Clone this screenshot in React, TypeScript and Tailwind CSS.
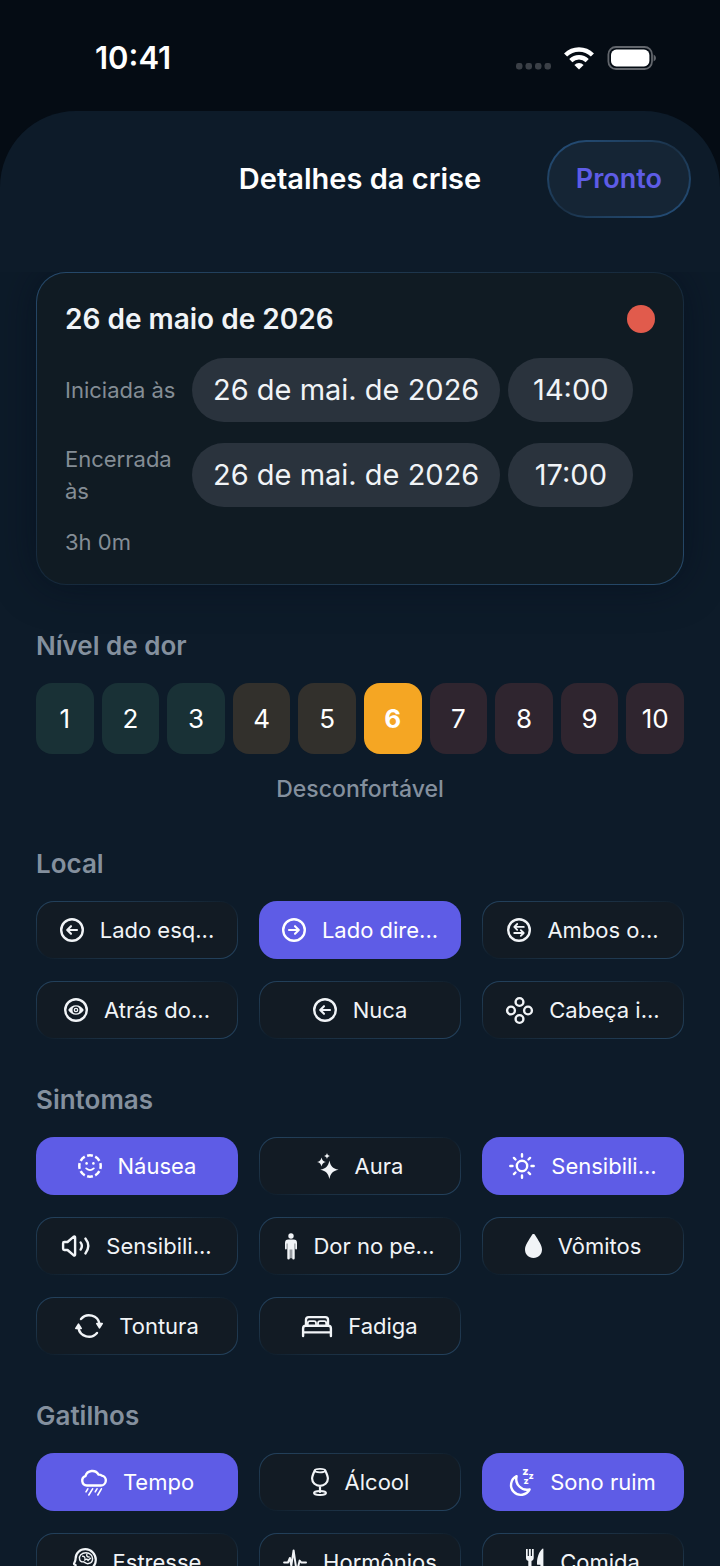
import { useState } from 'react';
import type { ReactNode } from 'react';
import clsx from 'clsx';

interface IconProps {
  w: number;
  h: number;
  children: ReactNode;
}

function Icon({ w, h, children }: IconProps) {
  return (
    <svg
      width={w}
      height={h}
      viewBox={`0 0 ${w} ${h}`}
      fill="none"
      stroke="currentColor"
      strokeWidth={2.4}
      strokeLinecap="round"
      strokeLinejoin="round"
      className="shrink-0 overflow-visible"
      aria-hidden="true"
    >
      {children}
    </svg>
  );
}

const arrowLeft = (
  <Icon w={24} h={24}>
    <circle cx="12" cy="12" r="10.8" />
    <path d="M17 12H7.4M11 8.2 7.2 12l3.8 3.8" strokeWidth="2.1" />
  </Icon>
);

const arrowRight = (
  <Icon w={24} h={24}>
    <circle cx="12" cy="12" r="10.8" />
    <path d="M7 12h9.6M13 8.2l3.8 3.8-3.8 3.8" strokeWidth="2.1" />
  </Icon>
);

const swap = (
  <Icon w={24} h={24}>
    <circle cx="12" cy="12" r="10.8" />
    <path d="M16.8 8.9H7.4M10.2 6 7.3 8.9l2.9 2.9M7.2 15h9.4M13.8 12.1l2.9 2.9-2.9 2.9" strokeWidth="1.8" />
  </Icon>
);

const eye = (
  <Icon w={24} h={24}>
    <circle cx="12" cy="12" r="10.8" />
    <path
      d="M4.2 12C6 9 8.8 7.3 12 7.3S18 9 19.8 12C18 15 15.2 16.7 12 16.7S6 15 4.2 12ZM12 8.5a3.5 3.5 0 1 0 0 7 3.5 3.5 0 0 0 0-7Z"
      fill="currentColor"
      fillRule="evenodd"
      stroke="none"
    />
    <circle cx="12" cy="12" r="1.7" strokeWidth="1.3" />
  </Icon>
);

const fourCircles = (
  <Icon w={27} h={27}>
    <circle cx="13.5" cy="5" r="3.9" />
    <circle cx="5" cy="13.5" r="3.9" />
    <circle cx="22" cy="13.5" r="3.9" />
    <circle cx="13.5" cy="22" r="3.9" />
  </Icon>
);

const dashedFace = (
  <Icon w={24} h={24}>
    <circle
      cx="12"
      cy="12"
      r="10.7"
      pathLength="80"
      strokeDasharray="7 3"
      strokeDashoffset="3.5"
      strokeLinecap="butt"
      strokeWidth="2.5"
    />
    <circle cx="8.6" cy="9.4" r="1.3" fill="currentColor" stroke="none" />
    <circle cx="15.4" cy="9.4" r="1.3" fill="currentColor" stroke="none" />
    <path d="M8.2 14.4q3.8 3.4 7.6 0" strokeWidth="1.8" />
  </Icon>
);

const sparkles = (
  <Icon w={22} h={27}>
    <g fill="currentColor" stroke="none">
      <path d="M12.4 7.4c1.3 5.8 3 7.8 9.2 9.3-6.2 1.5-7.9 3.5-9.2 9.3-1.3-5.8-3-7.8-9.2-9.3 6.2-1.5 7.9-3.5 9.2-9.3Z" />
      <path d="M4.5 4.5c.7 2.8 1.6 3.8 4.5 4.5-2.9.7-3.8 1.7-4.5 4.5C3.8 10.7 2.9 9.7 0 9c2.9-.7 3.8-1.7 4.5-4.5Z" />
      <path d="M10 0c.5 1.9 1.1 2.5 2.9 3-1.8.5-2.4 1.1-2.9 3-.5-1.9-1.1-2.5-2.9-3 1.8-.5 2.4-1.1 2.9-3Z" />
    </g>
  </Icon>
);

const sun = (
  <Icon w={26} h={26}>
    <circle cx="13" cy="13" r="5.2" />
    <path d="M13 1.3v2.2M13 22.5v2.2M1.3 13h2.2M22.5 13h2.2M4.9 4.9l1.6 1.6M19.5 19.5l1.6 1.6M4.9 21.1l1.6-1.6M19.5 6.5l1.6-1.6" />
  </Icon>
);

const speaker = (
  <Icon w={28} h={22}>
    <path d="M1.1 8.2v5.6q0 1.2 1.2 1.2h3.2l6 5.2q1.6 1 1.6-.8V2.6q0-1.8-1.6-.8l-6 5.2H2.3q-1.2 0-1.2 1.2Z" />
    <path d="M18.6 7.4q2.6 3.6 0 7.2M23.4 3.6q5.8 7.4 0 14.8" />
  </Icon>
);

const person = (
  <Icon w={12} h={27}>
    <g fill="currentColor" stroke="none">
      <circle cx="6" cy="3" r="2.7" />
      <path d="M3.4 6.6h5.2Q12 6.6 12 10v5.6a.9.9 0 0 1-1.8 0V10.4h-.5v14.9a1.25 1.25 0 0 1-2.5 0v-8.7H4.8v8.7a1.25 1.25 0 0 1-2.5 0V10.4h-.5v5.2a.9.9 0 0 1-1.8 0V10q0-3.4 3.4-3.4Z" />
      <path d="M4.8 16h.8v9.3h-.8zM6.400 16h.8v9.3h-.8z" />
    </g>
  </Icon>
);

const drop = (
  <Icon w={17} h={24}>
    <path
      d="M8.5 0c.8 0 1.3.5 1.7 1.2C13 6 17 10.8 17 15.6 17 20.6 13.5 24 8.5 24S0 20.6 0 15.6C0 10.8 4 6 6.8 1.2 7.2.5 7.7 0 8.5 0Z"
      fill="currentColor"
      stroke="none"
    />
  </Icon>
);

const rotate = (
  <Icon w={28} h={24}>
    <path d="M6 5A10.7 10.7 0 0 1 24.6 10M22 19A10.7 10.7 0 0 1 3.4 14" />
    <path d="M21.8 9.6h5.4L24.5 13.8ZM.8 14.4h5.4L3.5 10.2Z" fill="currentColor" strokeWidth="1.6" />
  </Icon>
);

const bed = (
  <Icon w={30} h={21}>
    <path d="M1.1 20V12.4q0-2.6 2.6-2.6h22.6q2.6 0 2.6 2.6V20M1.1 16.4h27.8M4 9.4V3.8q0-2.7 2.7-2.7h16.6Q26 1.1 26 3.8v5.6" />
    <path d="M5.8 9V7.2q0-2 2-2h4.2q2 0 2 2V9M16 9V7.2q0-2 2-2h4.2q2 0 2 2V9" strokeWidth="1.8" />
  </Icon>
);

const cloudRain = (
  <Icon w={27} h={28}>
    <path d="M6.8 17.5h14a5 5 0 0 0 1-9.9 4.3 4.3 0 0 0-3.2-1A7.2 7.2 0 0 0 5.4 8.2 4.8 4.8 0 0 0 6.8 17.5Z" />
    <path d="M7.8 20.8 6 23.8M12.6 20.8 8.8 27M17 20.8l-1.8 3M21.4 20.8 17.8 27" strokeWidth="1.6" />
  </Icon>
);

const wine = (
  <Icon w={18} h={28}>
    <path d="M3.8 2.6C2.6 5 1.1 8 1.1 10.6A7.9 7.2 0 0 0 16.9 10.6C16.9 8 15.4 5 14.2 2.6M9 18v6" strokeWidth="2.2" />
    <ellipse cx="9" cy="2.6" rx="5.3" ry="1.7" strokeWidth="1.8" />
    <ellipse cx="9" cy="25" rx="6" ry="1.9" strokeWidth="2" />
  </Icon>
);

const moonZzz = (
  <Icon w={24} h={28}>
    <path d="M6.6 8.2A9.8 9.8 0 1 0 19.6 21.4 10.8 10.8 0 0 1 6.6 8.2Z" />
    <g fill="currentColor" stroke="none" fontFamily="Inter, sans-serif" fontWeight="800">
      <text x="12.2" y="6.6" fontSize="11">z</text>
      <text x="18.4" y="11.4" fontSize="9">z</text>
      <text x="13.6" y="15.6" fontSize="9">z</text>
    </g>
  </Icon>
);

const brain = (
  <Icon w={24} h={28}>
    <path
      d="M17.6 26.9v-6.3c3.4-1.8 5.2-4.8 5.2-8.6A10.6 10.6 0 0 0 12.4 1.2C6.6 1.2 2.6 5.4 2.6 10.6c0 2-.6 3-1.4 4.6-.4 1 0 1.6 1.4 1.8v3.6q0 1.8 2 1.8h2.6v4.5"
      strokeWidth="2.2"
    />
    <path
      d="M6.6 11.4c-1-3.6 2-6.6 6.4-6.6 3.8 0 6.6 2.6 6.6 6 0 2.6-1.6 4.6-3.6 4.4-2 1.6-3.6-.6-5.4-1.4-2 .4-3.8-.6-4-2.4Zm3-3.2c1.4 0 2.4.6 2.2 2M13.8 6.4c-.4 2 .8 2.8 2.4 2.6M11.6 12c1.6-1.4 3-.8 3.6.6M17.6 10.2l-1.8 1.4"
      strokeWidth="1.4"
    />
  </Icon>
);

const pulse = (
  <Icon w={24} h={26}>
    <path d="M1.1 13.6h3.8l2-4.6 1.4 7.6L10.6 1.4l3.2 22.4 2.8-12.2 1.8 2H23" strokeWidth="2" />
  </Icon>
);

const forkKnife = (
  <Icon w={18} h={28}>
    <g fill="currentColor" stroke="none">
      <path d="M0 1h1.7v7h1.2V1h1.9v7H6V1h1.7v9.2q0 2-2.2 2.9v12.3a1.6 1.6 0 0 1-3.2 0V13.1Q0 12.2 0 10.2Z" />
      <path d="M17.4 1.2v24.2a1.5 1.5 0 0 1-3 0V16.8h-2.6q-.8 0-.8-.9C11 9 13 4 16.4.8q1-.6 1 .4Z" />
    </g>
  </Icon>
);

interface Option {
  label: string;
  icon: ReactNode;
}

const LOCATIONS: Option[] = [
  { label: 'Lado esq...', icon: arrowLeft },
  { label: 'Lado dire...', icon: arrowRight },
  { label: 'Ambos o...', icon: swap },
  { label: 'Atrás do...', icon: eye },
  { label: 'Nuca', icon: arrowLeft },
  { label: 'Cabeça i...', icon: fourCircles },
];

const SYMPTOMS: Option[] = [
  { label: 'Náusea', icon: dashedFace },
  { label: 'Aura', icon: sparkles },
  { label: 'Sensibili...', icon: sun },
  { label: 'Sensibili...', icon: speaker },
  { label: 'Dor no pe...', icon: person },
  { label: 'Vômitos', icon: drop },
  { label: 'Tontura', icon: rotate },
  { label: 'Fadiga', icon: bed },
];

const TRIGGERS: Option[] = [
  { label: 'Tempo', icon: cloudRain },
  { label: 'Álcool', icon: wine },
  { label: 'Sono ruim', icon: moonZzz },
  { label: 'Estresse', icon: brain },
  { label: 'Hormônios', icon: pulse },
  { label: 'Comida', icon: forkKnife },
];

const LEVELS = [1, 2, 3, 4, 5, 6, 7, 8, 9, 10];

function levelColor(level: number, active: boolean) {
  if (level <= 3) return active ? 'bg-[#34c78f]' : 'bg-[#193136]';
  if (level <= 6) return active ? 'bg-[#f5a623]' : 'bg-[#32302c]';
  return active ? 'bg-[#e15b4c]' : 'bg-[#2f252f]';
}

function StatusBar() {
  return (
    <div className="flex items-center justify-between pt-10 pr-16 pb-[35px] pl-[95px]">
      <span className="text-[31px] leading-9 font-semibold text-white">10:41</span>
      <div className="flex items-center gap-[13px]">
        <svg width="36" height="24" viewBox="0 0 36 24" fill="#3b4047" aria-hidden="true">
          <rect x="1" y="17" width="6.5" height="6.5" rx="2.4" />
          <rect x="10.5" y="17" width="6.5" height="6.5" rx="2.4" />
          <rect x="20" y="17" width="6.5" height="6.5" rx="2.4" />
          <rect x="29.5" y="17" width="6.5" height="6.5" rx="2.4" />
        </svg>
        <svg width="30" height="24" viewBox="0 0 30 24" fill="none" stroke="#fff" strokeWidth="4.4" aria-hidden="true">
          <path d="M1.6 9a19 19 0 0 1 26.8 0" />
          <path d="M6.8 14.6a11.6 11.6 0 0 1 16.4 0" />
          <path d="M15 23.6 10.4 18.9a6.5 6.5 0 0 1 9.2 0Z" fill="#fff" stroke="none" />
        </svg>
        <svg width="49" height="24" viewBox="0 0 49 24" fill="none" aria-hidden="true">
          <rect x="1.4" y="1" width="43.6" height="22" rx="7.5" stroke="#62666c" strokeWidth="1.8" />
          <rect x="4" y="3.6" width="38.4" height="16.8" rx="5.4" fill="#fff" />
          <path d="M46.6 8.4q2.4 1 2.4 3.6t-2.4 3.6Z" fill="#62666c" />
        </svg>
      </div>
    </div>
  );
}

function DateRow({ id, label, date, time }: { id: string; label: string; date: string; time: string }) {
  const pill = 'h-16 rounded-full bg-[#2a333d] text-[29px] text-[#f1f4f7] whitespace-nowrap';
  return (
    <div className="flex items-center gap-4">
      <span id={id} className="w-[111px] text-[22px] leading-8 text-[#848d95]">
        {label}
      </span>
      <div className="flex gap-2" role="group" aria-labelledby={id}>
        <button type="button" className={clsx(pill, 'px-[21px]')}>{date}</button>
        <button type="button" className={clsx(pill, 'min-w-[125px] px-[21px]')}>{time}</button>
      </div>
    </div>
  );
}

function Section({ title, children }: { title: string; children: ReactNode }) {
  return (
    <section className="flex flex-col gap-[21px]">
      <h2 className="text-[26px] leading-8 font-semibold text-[#84909e]">{title}</h2>
      {children}
    </section>
  );
}

interface ChipGridProps {
  options: Option[];
  initial: number[];
}

function ChipGrid({ options, initial }: ChipGridProps) {
  const [selected, setSelected] = useState(initial);

  const toggle = (index: number) => {
    setSelected((prev) => (prev.includes(index) ? prev.filter((i) => i !== index) : [...prev, index]));
  };

  return (
    <div className="grid grid-cols-3 gap-x-[21px] gap-y-[22px]">
      {options.map((option, i) => {
        const active = selected.includes(i);
        return (
          <button
            key={i}
            type="button"
            aria-pressed={active}
            onClick={() => toggle(i)}
            className={clsx(
              'flex h-[58px] items-center justify-center gap-4 rounded-[18px] border border-transparent text-[22px] whitespace-nowrap',
              active
                ? 'bg-[#5e5ce6] bg-origin-border text-white'
                : 'text-[#f1f4f7] [background:linear-gradient(#121b24,#121b24)_padding-box,linear-gradient(to_bottom_right,#24435f,#1a2e40_35%,#0f1d2a_50%,#1a2e40_65%,#24435f)_border-box]'
            )}
          >
            {option.icon}
            <span>{option.label}</span>
          </button>
        );
      })}
    </div>
  );
}

export default function App() {
  const [level, setLevel] = useState(6);

  return (
    <div className="flex h-dvh flex-col bg-[#050c14] font-[Inter,'Liberation_Sans',sans-serif]">
      <StatusBar />

      <main className="flex min-h-0 flex-1 flex-col overflow-hidden rounded-t-[76px] bg-[#0d1b29]">
        {/* Header */}
        <header className="grid grid-cols-[1fr_auto_1fr] items-center px-[29px] pt-[29px] pb-[54px]">
          <h1 className="col-start-2 text-[29px] font-semibold text-white">Detalhes da crise</h1>
          <button
            type="button"
            className="h-[78px] justify-self-end rounded-full border-2 border-transparent px-[27px] text-[27px] font-semibold text-[#5e5ce6] [background:linear-gradient(#152535,#152535)_padding-box,linear-gradient(to_bottom_right,#25507c,#1d3a56_40%,#1a2f44_50%,#1d3a56_60%,#25507c)_border-box]"
          >
            Pronto
          </button>
        </header>

        <div className="flex min-h-0 flex-1 flex-col gap-[45px] overflow-y-auto px-9 [scrollbar-width:none]">
          {/* Summary card */}
          <section className="flex shrink-0 flex-col gap-[21px] rounded-[30px] border border-transparent p-7 shadow-[0_0_40px_rgba(4,12,28,0.5)] [background:linear-gradient(#101b23,#101b23)_padding-box,linear-gradient(to_bottom_right,#264a6c,#1c3246_35%,#15283a_50%,#1c3246_65%,#264a6c)_border-box]">
            <div className="flex items-center justify-between">
              <h2 className="text-[28px] leading-9 font-semibold text-[#f1f4f7]">26 de maio de 2026</h2>
              <span className="size-7 rounded-full bg-[#e15b4c]" />
            </div>
            <DateRow id="started" label="Iniciada às" date="26 de mai. de 2026" time="14:00" />
            <DateRow id="ended" label="Encerrada às" date="26 de mai. de 2026" time="17:00" />
            <p className="text-[22px] leading-7 text-[#848d95]">3h 0m</p>
          </section>

          <Section title="Nível de dor">
            <div className="grid grid-cols-10 gap-2">
              {LEVELS.map((n) => (
                <button
                  key={n}
                  type="button"
                  aria-pressed={n === level}
                  onClick={() => setLevel(n)}
                  className={clsx(
                    'h-[71px] rounded-2xl text-[26px] text-white',
                    n === level && 'font-bold',
                    levelColor(n, n === level)
                  )}
                >
                  {n}
                </button>
              ))}
            </div>
            <p className="text-center text-[23px] leading-7 font-medium text-[#84909e]">Desconfortável</p>
          </Section>

          <Section title="Local">
            <ChipGrid options={LOCATIONS} initial={[1]} />
          </Section>

          <Section title="Sintomas">
            <ChipGrid options={SYMPTOMS} initial={[0, 2]} />
          </Section>

          <Section title="Gatilhos">
            <ChipGrid options={TRIGGERS} initial={[0, 2]} />
          </Section>
        </div>
      </main>
    </div>
  );
}
